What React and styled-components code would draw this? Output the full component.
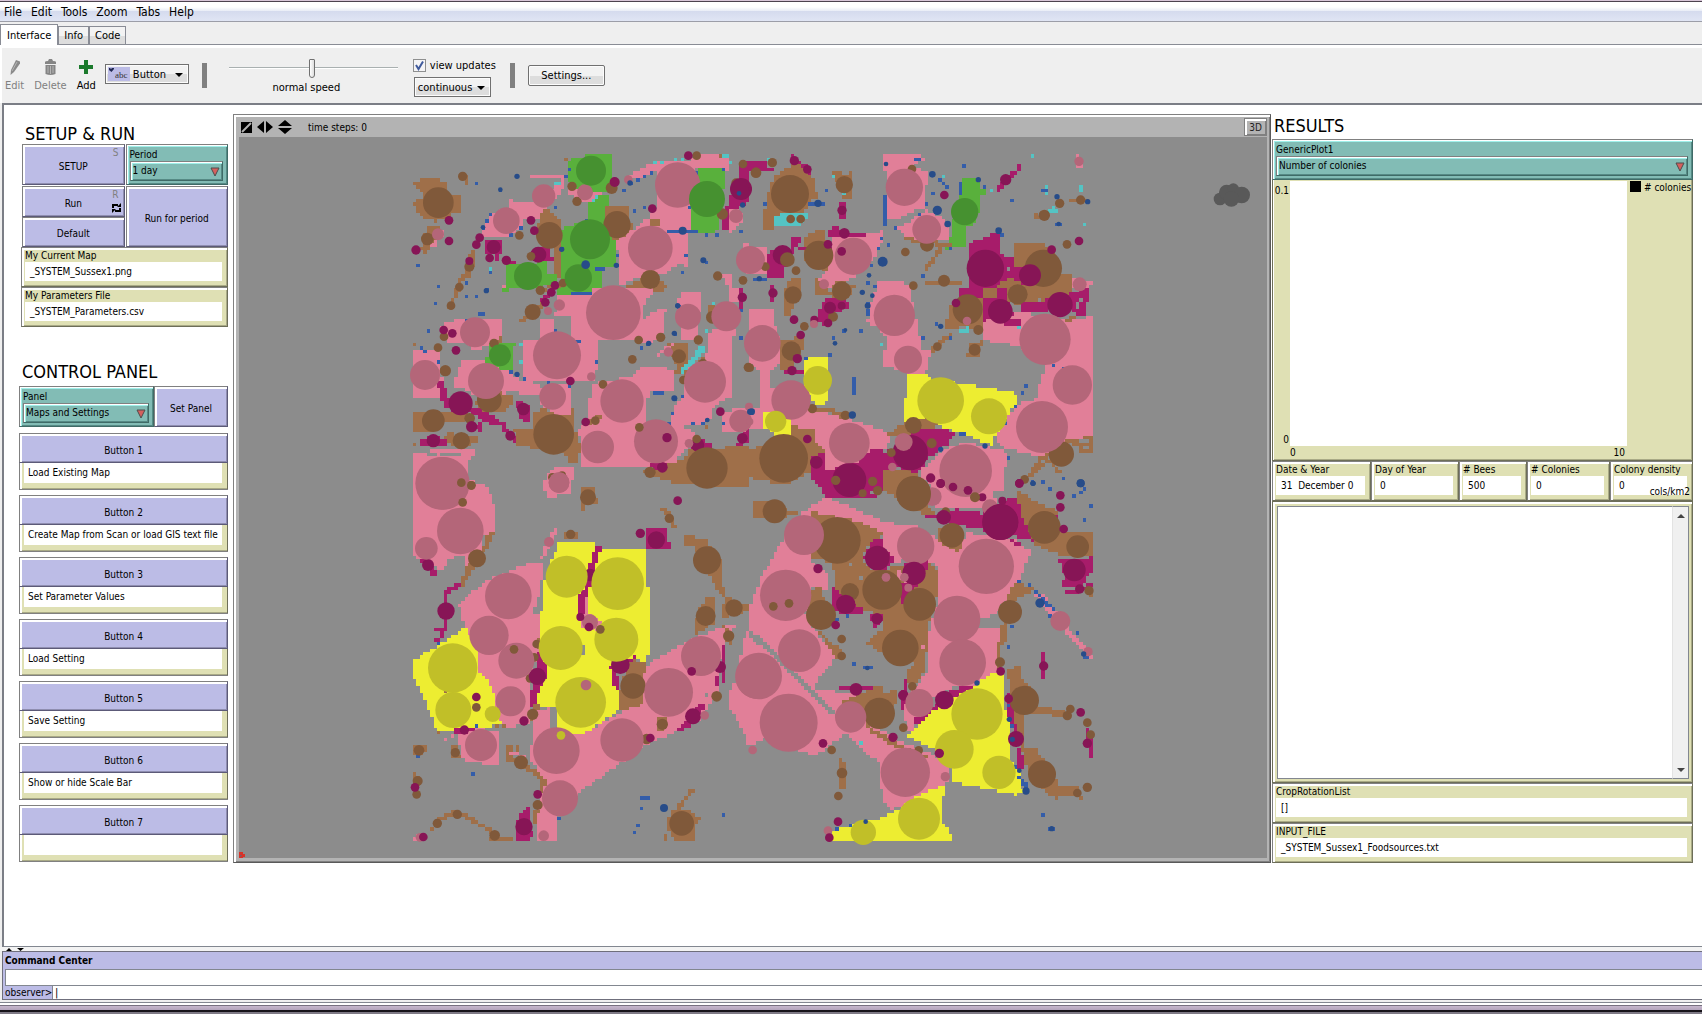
import React from "react";
import styled, { createGlobalStyle } from "styled-components";

const UI_FONT = `"DejaVu Sans Condensed", "Noto Sans", sans-serif`;

const tints = {
  p: "#e17f98",
  P: "#b46679",
  b: "#9f6f49",
  B: "#80593a",
  m: "#a71c6a",
  M: "#871556",
  g: "#59b03c",
  G: "#469130",
  y: "#eded31",
  Y: "#c1bf28",
  u: "#345da9",
  U: "#274c89",
  c: "#54c4c4",
  x: "#8c8c8c",
};

// the world is split in four sectors, each with its own origin
const origins = { A: [483, 9], B: [1533, 9], C: [483, 1029], D: [1533, 1029] };

// colour, then the corners of the field
const fields = {
  A: `
b 39,183 70,180 70,155 39,133 39,122 120,112 124,128 145,120 145,165 183,165 183,215 150,218 150,235 112,235 105,245 80,240 60,225
b 190,100 203,100 203,135 193,135
b 80,258 122,258 122,290 90,320 80,338 60,335 70,300
b 213,330 225,330 223,360 213,410 193,410 200,380
g 500,92 510,55 552,55 552,42 634,42 634,155 540,155 500,122
p 387,104 490,104 490,145 470,175 435,205 430,235 380,235 340,287 243,287 260,240 300,205 328,205 328,165 337,185 400,185 480,128 480,115 387,115
b 410,255 430,210 450,208 480,240 480,310 478,410 460,410 460,320 415,300
m 255,300 305,300 305,340 297,340 297,358 285,358 285,340 255,340
m 320,360 395,360 395,330 445,320 450,350 460,360 320,369
g 485,266 560,240 562,190 595,165 624,165 624,240 645,310 652,380 603,385 603,460 472,460 480,420
g 316,370 437,366 437,405 470,405 470,430 430,440 325,440 325,452 305,452 316,420
b 612,195 684,195 684,235 704,262 690,300 640,300 620,250
p 500,135 570,150 605,160 580,190 540,180 505,165
p 690,105 735,80 765,68 870,60 900,42 940,42 982,55 982,90 890,85 870,130 870,280 858,300 858,380 840,368 800,400 775,400 700,415 655,440 655,380 650,300 720,255 748,230 767,205 768,95 700,120
g 890,85 980,85 980,120 965,160 955,190 950,278 900,278 870,262 870,210 885,140
m 1023,62 1050,62 1050,180 1000,220 985,265 963,265 985,180 1020,120
p 985,200 1025,215 1025,250 1000,275 985,275
b 748,238 776,238 776,262 748,262
b 680,440 720,415 760,425 797,430 795,452 760,452 750,440 700,445
p 470,462 540,458 620,440 755,445 755,465 735,490 730,520 690,600 595,600 595,655 585,720 370,720 367,600 420,600 420,535 460,535 460,600 510,600 510,525 460,522 480,505
p 685,600 690,570 725,540 770,508 800,505 790,540 785,590 740,612 700,600
p 840,455 900,455 903,500 890,545 890,600 840,600 835,500
p 925,575 990,560 1012,575 993,605 993,770 940,800 925,850 840,862 808,850 820,800 850,770 850,700 920,640
p 965,402 1000,402 1000,440 1020,450 1020,485 985,480 985,440
p 1023,310 1050,310 1050,410 1023,390
b 930,492 950,492 950,550 920,550
b 805,605 858,605 858,700 820,705 835,680 810,640
c 840,690 875,655 895,615 910,615 910,640 875,680 850,700
g 265,605 345,605 345,612 335,640 335,687 290,687 245,670 270,640
p 125,560 150,545 190,535 300,535 313,570 300,605 270,612 220,635 200,612 140,612 145,590 120,575
b 285,605 313,575 300,615 260,640
p 39,630 122,635 125,700 135,760 122,778 39,778
p 185,657 212,665 255,665 330,700 370,725 420,730 420,765 330,755 250,770 180,745 160,735
b 240,755 335,760 335,790 310,815 250,820 225,790
b 39,820 100,815 160,812 205,820 200,840 110,855 100,880 39,880
m 110,720 130,720 145,770 180,790 250,810 312,850 345,890 357,915 320,890 300,855 260,850 215,820 135,808 120,760
m 60,900 90,885 130,895 145,905 130,922 60,922
m 190,870 240,848 240,872
b 150,880 255,895 225,905 200,920 160,920 130,890
m 358,770 370,790 388,800 388,842 367,842 350,800
b 340,865 400,870 400,820 430,800 460,820 520,805 525,870 545,920 530,965 500,965 500,945 430,930 350,915
p 410,740 508,735 508,822 465,822 420,790
p 575,740 610,720 690,715 728,680 820,688 820,750 760,750 735,790 735,850 830,840 905,900 850,930 830,965 820,980 612,985 545,975 545,890 530,880 560,850 562,785 575,770
m 750,975 820,965 820,980 780,998
m 850,940 900,900 930,905 930,925 870,945
b 705,985 770,990 860,950 860,925 1050,922 1050,1045 1040,1045 800,1025
p 39,940 120,930 235,925 205,970 210,1050 39,1050
p 440,1050 440,1010 470,978 522,985 522,1010 510,1050
b 545,1038 580,1038 580,1050 545,1050
p 970,815 1050,800 1050,880 970,880
m 1003,920 1035,870 1050,870 1050,900 1020,920`,
  B: `
m 0,62 45,62 45,85 75,85 75,92 0,95
m 117,42 127,42 150,70 185,85 180,100 117,65
b 50,215 45,190 70,110 110,85 140,70 195,115 195,150 210,165 208,178 180,180 165,215 80,228 75,265 38,265 38,195
c 75,228 130,213 170,215 170,235 145,258 75,258
b 240,95 262,95 285,105 300,95 312,95 312,165 300,175 275,170 262,130
m 270,185 282,185 282,235 270,235
b 148,258 158,258 158,290 148,290
b 160,290 210,268 230,268 230,300 250,330 250,390 235,405 185,370 160,350
m 125,290 158,290 158,300 130,330 120,360 105,390 105,410 55,410 48,360 60,330 120,330
p 240,290 380,280 403,265 395,310 365,365 320,405 265,435 210,450 205,420 230,395 245,340
m 228,280 250,260 270,265 290,280 345,280 345,290 240,292
m 140,317 250,317 250,328 140,328
p 0,320 45,318 45,400 0,408
b 120,412 158,412 158,450 130,480 125,520 98,525 105,500 105,450
b 195,415 240,450 260,425 320,435 305,460 275,500 240,495 245,460 190,460
m 63,430 75,430 75,490 63,490
m 225,480 290,480 300,500 255,520 240,545 215,560 200,530
b 95,600 160,590 165,625 120,687 88,687 90,660
p 3,505 75,505 75,560 90,600 90,665 65,690 65,740 150,800 270,830 350,855 430,880 400,935 360,945 320,970 220,995 220,950 190,895 195,875 70,860 40,860 0,870 0,820 25,800 25,690 0,665
m 97,688 160,688 160,698 97,698
y 168,648 240,648 240,780 205,800 180,770 168,740
y 37,812 117,812 117,882 70,882 65,872 37,870
p 402,42 505,42 525,60 480,75 535,95 520,190 530,210 590,240 597,300 470,300 440,265 530,215 515,200 415,250 415,120 402,90
g 640,114 680,114 690,140 712,145 712,160 688,165 680,250 648,260 648,318 590,326 600,290 610,240
m 660,310 720,283 745,270 755,300 745,345 790,350 795,430 775,500 815,550 780,565 700,545 630,480 630,440 655,440
b 792,310 880,310 915,340 930,400 965,405 965,460 900,480 870,512 740,475 700,475 705,440 740,440 790,400
m 740,440 775,440 775,485 740,475
m 813,485 890,485 890,515 813,515
m 785,380 830,385 830,440 785,415
m 885,480 975,455 1018,440 1008,530 980,530 955,500
p 965,415 1028,425 1010,445 965,445
b 600,500 640,465 700,480 705,560 720,575 640,560 580,575
c 610,582 660,555 660,570 640,582
p 700,545 810,515 960,545 1029,525 1029,880 955,915 950,940 870,950 750,920 735,890 800,790 855,785 885,680 810,620 702,600
m 745,535 812,535 812,555 770,560
b 660,610 700,600 685,655 648,655
p 385,425 485,430 485,470 495,530 508,540 508,590 515,630 545,635 525,700 490,700 400,680 395,660 415,600 385,560 352,550 360,500 372,460
u 312,708 321,708 321,759 312,759
y 475,700 535,700 540,720 620,728 725,745 803,760 803,795 780,815 735,890 730,915 700,905 560,855 495,835 480,852 457,850 465,770 475,765
b 480,840 530,830 580,860 500,865 470,895 415,890
m 505,860 618,875 590,915 530,960 505,1000 505,1010 470,1000 400,950 410,920 420,930
p 510,990 590,925 650,905 770,935 760,1050 560,1050 510,1010
m 170,945 230,935 230,990 320,970 345,935 400,930 440,960 405,1050 230,1050 190,1030
b 0,925 60,920 117,882 117,860 195,865 195,900 228,935 180,950 180,1000 100,1035 0,1015
b 405,990 440,985 500,1000 540,1050 405,1050`,
  C: `
p 39,0 200,0 265,20 285,80 285,160 250,165 250,205 195,270 190,225 150,235 125,270 39,230
m 50,232 75,240 110,275 110,290 95,285
b 240,220 262,160 285,160 265,200 230,250 210,290 185,322 180,310 200,260
y 39,540 95,510 190,445 205,445 232,510 240,560 300,680 315,735 210,742 160,755 110,755 90,700 60,625 39,590
p 175,370 255,305 370,255 428,245 425,310 400,400 420,405 420,500 390,590 390,735 305,740 275,620 235,570 232,500 190,430
y 480,180 500,190 610,192 610,203 735,203 735,315 747,320 747,520 735,550 700,530 640,570 655,650 655,690 550,765 470,765 470,685 408,682 418,500 430,330 440,280
x 546,498 552,498 552,528 546,528
m 585,192 610,192 595,230 575,300 565,345 551,350 551,400 531,400 531,355 550,330
p 552,355 560,355 565,400 610,430 590,450 550,440 531,420 551,400
m 410,510 437,545 437,600 405,660 405,685 387,685 387,640 410,600
b 400,675 420,675 415,720 385,720
m 630,560 660,545 705,530 705,560 650,580 660,640 635,610
b 700,540 735,545 735,690 655,692 665,600
p 735,560 850,490 1000,425 1003,440 965,500 950,640 900,720 730,800 540,935 470,1000 470,1082 408,1082 410,990 430,900 385,830 400,770 395,690 450,685 455,740 470,765 545,765 655,700 730,670
b 848,160 920,180 970,255 970,320 980,350 960,345 925,280 880,200 850,190
b 880,465 890,400 920,355 950,355 945,430 900,455
b 965,415 975,350 1050,378 1050,392 975,412
b 785,88 805,88 828,140 815,142
m 735,150 798,150 798,182 807,182 807,210 735,205
b 545,18 580,18 580,55 595,55 595,75 552,77 552,97 545,97
b 490,160 530,150 530,175 500,175
m 943,590 960,590 960,620 943,620
m 830,755 850,735 895,675 920,675 900,710 870,740
b 768,715 805,715 805,740 770,755
p 985,650 1015,575 1035,458 1050,458 1050,810 1005,700 982,690
p 175,770 200,745 300,750 297,857 245,857 240,845 185,840
m 163,745 225,738 225,750 185,765 163,762
b 39,795 80,795 75,810 50,835 39,820
b 153,795 168,795 180,835 153,835
b 315,795 335,795 345,845 315,845
m 350,1020 385,980 388,1020 400,1070 385,1082 348,1082
b 400,985 418,985 408,1030 400,1030
b 39,880 50,880 65,900 50,930 39,900
b 265,1070 335,1070 335,1082 265,1082
p 39,1070 70,1060 70,1082 39,1082
b 800,1040 810,990 860,985 885,1010 908,1012 880,1040 880,1082 820,1082
b 787,1060 798,1060 798,1082 787,1082
p 430,0 510,0 510,40 440,55`,
  D: `
m 190,0 350,0 345,30 390,50 230,50
b 10,65 80,58 85,85 155,95 80,118 5,118
p 0,380 30,300 100,175 160,95 230,50 400,125 500,140 560,190 440,250 400,200 400,160 330,130 180,105 180,240 240,290 240,330 190,320 165,400 200,460 260,530 200,600 195,630 0,450
b 180,95 330,125 400,160 375,200 345,200 340,250 180,240
p 0,470 70,530 250,700 290,760 200,825 150,815 50,770 0,800
p 255,690 190,630 330,640 350,720 440,780 540,820 600,860 590,910 425,990 400,960 385,850 290,760
p 440,165 550,165 620,215 650,160 780,165 843,215 800,320 760,370 740,400 690,420 540,445 565,370 565,290 558,250 480,240
p 540,448 755,448 740,580 690,620 610,620 550,650 500,730 480,760 458,700 458,660 530,580
b 250,250 340,250 375,270 530,250 558,255 565,310 555,380 535,440 525,560 500,610 465,610 470,570 500,555 420,530 345,490 400,445 400,400 255,390
p 445,270 475,285 475,310 445,300
m 340,235 365,180 402,170 402,220 435,225 430,250 395,270 360,260
m 250,320 300,360 340,390 340,403 270,403 250,390
m 350,400 400,400 400,420 375,445
m 455,315 500,315 475,345 470,370 455,370
m 460,250 535,240 535,260 500,310 465,300
b 165,360 190,325 212,325 215,350 235,365 240,400 200,440
b 200,445 220,460 270,520 260,540
b 560,145 640,150 630,220 560,180
m 525,110 620,88 700,100 780,50 800,50 850,170 855,200 790,170 720,155 600,130
b 410,0 500,0 540,80 560,110 525,105 400,30
p 540,30 560,0 755,0 730,40 745,80 620,85 550,80
b 795,30 880,75 930,95 930,155 1029,160 1029,230 940,230 860,195 820,120
m 928,240 1029,232 1029,270 995,320 928,322 945,290
m 945,335 975,330 1029,305 1029,320 975,342
b 795,305 855,325 825,345 800,350 775,400 770,480 755,500 755,560 735,575 745,490 755,430 770,350
p 840,335 875,340 920,390 960,450 1029,530 1020,540 950,460 900,400
m 876,520 885,520 885,600 876,600
m 262,612 300,622 370,622 370,633 270,633
b 280,665 385,615 400,620 400,645 440,625 445,660 400,700 360,740 440,790 535,830 530,835 440,805 365,760 330,690
y 475,770 550,680 610,655 690,605 720,580 760,580 762,690 785,720 785,840 800,850 820,940 800,945 610,908 610,870 540,800
m 495,715 550,680 600,630 680,615 600,660 540,700 500,745
b 770,565 812,560 815,600 855,640 860,680 935,690 960,705 935,712 860,700 825,700 825,805 860,808 875,830 900,860 930,918 985,918 995,955 980,948 900,948 850,900 825,850 800,750
m 765,635 785,635 790,720 805,740 805,800 825,840 825,865 805,865 790,750 765,690
m 1008,745 1018,745 1030,790 1030,835 1018,835
m 460,600 474,600 474,625 465,690 455,690 455,640
y 250,1055 270,1042 390,1015 450,985 500,950 590,910 575,970 580,1030 608,1072 608,1082 250,1082
b 262,838 270,838 292,860 282,930 270,930`,
};

// hedges, tracks and other strips one patch wide
const strips = {
  A: `
b 188,405 178,440 165,470 150,500
b 362,545 395,520 430,490
u 808,272 888,272
u 585,385 608,385
u 522,457 570,457
u 237,518 250,518
u 530,601 540,601
u 770,754 782,754
p 100,320 130,270
b 415,450 500,430
m 430,480 470,435
b 850,720 905,660
p 780,640 820,615
b 600,830 560,850
m 1027,445 1027,500
x 85,948 105,948
x 130,948 180,948`,
  B: `
b 525,390 550,360 575,315
b 470,295 500,305 600,314
b 525,427 635,427
u 180,190 225,190
u 15,416 40,416
m 745,150 760,125 805,90 808,76
u 498,58 512,58
u 634,135 634,160
b 545,630 580,600 605,580
b 960,180 1015,180
b 862,218 862,234 890,234
c 900,210 922,210
c 905,200 912,200
u 918,252 935,252
c 885,145 885,158
b 820,1020 850,1000 870,960 900,940
b 850,990 900,960 930,1000
b 950,905 985,905 995,935 1020,935 1020,890 1000,890
b 970,915 1020,912
x 420,246 460,240 505,215
b 190,805 240,810 280,828
b 420,885 455,860
b 950,545 975,530
u 630,887 645,887
u 408,170 408,258
m 805,1035 815,1022`,
  C: `
m 180,310 140,335 133,430 138,440 125,455 120,485 105,485
m 105,452 130,445
p 430,230 445,190 465,150
m 967,500 967,600
b 95,1048 125,1015 165,997 215,1020 275,1052
b 345,845 400,875 432,905 425,930
b 828,1000 845,970 875,935
b 975,440 990,490
u 728,953 743,953
b 350,800 350,820
p 330,815 370,830
b 410,480 410,500`,
  D: `
x 5,460 70,520 250,700
u 862,338 905,385
u 340,564 360,564
u 897,1046 912,1046
b 263,500 275,525
u 998,520 1018,535
u 815,900 830,935
x 770,600 770,690
x 797,800 797,860
x 690,420 760,420
x 690,432 760,432
x 600,875 600,900
b 920,945 920,958
b 1022,335 1022,350
x 780,170 850,190`,
};

// single patches
const specks = {
  A: `
u 351,109 229,129 301,149 465,200 269,222 259,241 249,262 332,284 362,262 55,375 116,436 106,487 197,426 197,467 229,467 259,452 269,396 197,538 85,569 65,620 75,630 116,662 495,109 505,88 485,328 557,240 649,344 649,376 700,210 731,200 670,150 690,132 710,118 731,109 751,99 884,98 967,88 915,283 946,283 1027,272 844,396 853,344 915,365 833,497 823,580 721,620 746,610 588,662 465,570 448,723 372,713 351,703 332,693 1018,513 1018,590 803,846 874,856 844,765 823,775 813,815 922,840 967,846 508,733 912,847 870,205
c 762,67 782,67 832,58 844,58 967,47 985,47 987,67 462,129 475,129 578,181 588,171 269,385 362,610 362,662 936,487 915,570
b 495,58 957,47 45,610 45,908 915,866
p 310,436 136,552`,
  B: `
u 643,78 574,119 583,129 591,140 552,160 706,140 787,181 881,155 889,150 530,190 511,221 408,200 439,262 388,324 419,313 398,294 367,375 357,426 378,436 351,487 337,570 286,570 255,590 245,641 173,652 520,406 603,323 563,550 603,590 520,590 234,150 40,190 829,733 819,754 798,796 940,682 910,673 768,848 776,949 881,1021 940,1011 1003,1042 757,283 357,508 357,518
c 849,47 583,109 726,150 992,140 992,150 1003,252 255,109 286,160 57,58 398,610 808,559
p 982,47 982,78 992,78
x 776,385 982,487 992,477 982,497 868,477
b 210,455 250,515`,
  C: `
u 116,493 55,831 218,882 475,1015 721,985 711,1036 700,1057 967,1006 229,738
b 116,760 290,740 312,740 136,638
p 136,780 156,770
x 915,646`,
  D: `
u 881,3 900,31 971,52 1022,82 1003,124 992,42 1003,22 808,308 838,320 776,503 787,434 899,411 982,461 316,554 295,411 265,421 265,1046 305,1036 881,1006 776,678 787,740 808,892 818,903 798,862 849,10
c 337,790
p 520,503
x 306,258 337,298 705,165
m 788,183 798,193 808,195 920,105`,
};

// food sources: x,y,radius
const sources = {
  A: `
B 115,188,46 188,109,14 82,297,19 208,380,15 178,441,13 153,497,13 448,286,40 358,286,13 651,254,41 516,139,14 531,184,14 635,144,18 890,47,13 1029,72,13 1008,129,14 967,222,17
M 147,241,13 147,303,13 48,330,14 239,293,13 229,314,13 393,241,13 403,272,13 281,321,21 269,354,13 319,361,14 208,363,12 415,344,24 644,126,15 757,206,13 865,47,13 1023,147,33 465,436,13 454,457,13 436,487,13 1027,472,14
B 393,349,13 421,451,14 489,429,13 398,516,24 751,418,29 953,408,14 1029,421,13 282,610,14 132,590,13 114,623,13 136,692,17 697,658,13 716,600,13 782,592,14 895,600,14 937,532,19 837,649,21 909,669,13 850,720,13 609,733,13
B 268,780,37 100,842,34 209,835,16 184,902,26 461,883,61 586,842,13 750,997,17 457,1012,13 486,1006,12 1045,682,14
M 131,570,13 157,580,13 168,631,13 182,790,36 370,807,19 215,860,17 100,902,20 331,887,15 511,723,13 557,846,13 961,815,13 787,982,16 893,915,20 1027,895,16
P 114,283,18 431,168,35 319,242,40 555,157,24 685,119,13 833,135,68 751,324,67 1008,228,21 1058,360,37 478,495,17 444,513,12 640,518,82 864,530,39 979,529,45 225,577,45 471,646,72 75,705,45 258,723,54 574,710,13 458,769,40 666,783,65 915,725,63 805,636,14 593,921,49 768,904,66 1022,843,34 867,910,13 130,1030,79 477,1028,31 1047,800,12
G 573,92,45 921,177,54 570,298,60 384,408,42 535,414,41 300,646,33
U 848,272,12 557,374,13 485,328,8 649,376,8 351,109,8 301,149,7 249,262,7 910,361,9 833,497,8 351,703,8 823,775,9 1017,160,7 1028,195,8 823,580,8 746,610,8 690,129,8 259,452,8 922,840,7 1050,815,9
B 184,1027,13 214,1036,13 718,862,13 890,897,13 921,984,62
M 801,893,14`,
  B: `
B 120,162,57 67,68,14 18,98,16 283,134,26 486,87,13 122,237,13 152,237,13 206,346,44 138,392,13 129,465,26 275,453,29 531,314,21 466,336,13 582,422,18 490,437,13 929,190,14 883,226,17 992,180,14 951,313,13 880,385,56 803,463,30 653,508,45 685,570,15 674,629,18 562,620,13 163,559,13 249,530,15 124,633,29 187,806,14 286,826,14
M 133,62,14 172,88,13 276,211,14 583,165,13 767,119,17 283,280,16 98,345,30 234,313,13 69,459,14 240,503,18 275,497,12 132,539,13 193,539,12 234,549,13 152,585,13 142,656,14 126,692,14 987,303,13 706,385,56 840,406,33 905,329,13 930,494,38 751,514,37 618,489,13 0,147,6 172,897,13 199,967,19
B 112,359,22 46,380,13 490,856,25 101,955,73 934,942,38 824,1018,13 0,683,12
M 481,938,53 298,1020,51
P 463,142,56 530,268,43 310,349,56 0,360,42 222,433,15 192,552,12 37,610,55 123,780,59 433,526,62 474,659,42 987,64,14 989,433,21 651,543,13 885,598,77 967,735,59 876,861,78 0,845,10 298,909,61 461,906,27 427,981,13 647,992,79
G 644,215,41
Y 203,721,43 77,844,32 572,782,70 717,829,54
U 204,190,11 547,103,10 562,211,14 593,252,10 685,119,8 398,365,15 746,272,10 337,457,8 353,497,9 367,467,7 357,406,7 255,610,7 307,825,11 5,815,10 572,559,8 921,170,8 1013,185,8 849,1030,8 992,1030,12 705,918,8 572,928,8 28,416,8 286,570,6 408,72,7 926,252,7
M 275,334,13 542,1014,14 572,1030,13 808,1030,13
B 257,1021,14 368,1024,14 545,910,15 424,938,13 491,1060,52`,
  C: `
B 231,235,27 564,52,24 512,163,14 808,115,14 921,241,42 917,408,30 1002,384,26 986,468,17 699,618,38 787,733,17 950,649,16 740,777,16 398,703,17 57,811,16 166,818,14 363,847,21 53,903,15 50,943,13 413,975,15 112,1030,14 172,1003,14 284,1066,16 845,1030,37 410,492,13 403,532,13 390,595,13
M 84,255,18 138,393,26 412,589,26 193,750,14 372,723,14 413,943,13 45,922,13 372,1040,26 833,62,13 721,160,14 769,180,26 570,285,19 661,554,28 960,561,18 879,709,24 751,774,13
P 125,10,79 181,153,70 79,205,34 447,186,15 325,348,70 267,466,59 349,542,54 332,664,45 243,795,48 469,812,70 480,955,54 431,1067,16 570,427,24 903,528,60 806,637,73 666,780,65 914,706,13 477,8,31 1073,590,67 60,1072,13
Y 500,290,63 653,311,79 482,504,66 649,479,66 542,667,76 158,564,74 160,690,54 278,702,24 483,766,13
U 792,984,12
B 184,8,13 214,16,13 188,67,13 342,508,13 601,448,13 229,682,13
M 541,411,12 567,441,13 229,651,13 875,574,13 70,1071,13
P 558,615,16`,
  D: `
B 74,94,36 262,181,70 300,336,27 606,166,37 213,405,45 275,477,13 275,528,13 451,504,55 487,619,13 388,700,47 460,743,13 506,811,13 883,142,49 983,200,34 1017,332,14 780,396,36 750,547,15 823,661,44 952,707,14 961,687,13 1012,728,13 1022,764,13 876,883,42 982,939,13 1012,922,14 276,879,16 245,810,13 265,948,13 587,95,13
M 382,234,37 287,373,29 204,266,14 257,435,13 381,416,17 581,112,22 751,126,54 757,62,12 931,46,13 931,82,13 941,147,13 973,270,34 989,327,14 752,574,13 881,558,14 318,628,19 460,646,16 429,772,14 992,697,13 1012,790,14 219,790,13 264,1025,13 808,10,13 697,52,12
P 162,165,60 107,346,77 148,512,64 497,198,56 547,50,28 621,417,70 638,548,70 508,669,42 709,259,83 931,423,30 1014,515,14 26,588,70 116,728,87 302,711,47 466,877,74 586,890,14 8,810,13 234,1052,13 720,82,24
B 397,329,60 509,373,49 491,42,52
M 492,280,35 583,660,28 798,777,24 776,656,13 238,1073,13 572,11,13 609,21,13 654,31,13
Y 681,702,77 613,808,58 747,877,50 507,1016,63 340,1057,38
P 408,292,13 463,292,13 475,323,12
M 568,820,14 751,126,54
B 70,379,13 117,370,13 675,52,15 383,32,14 338,40,12
U 870,369,14 681,609,8 778,718,8 787,778,8 828,933,11 347,1025,7 905,1046,8 808,872,7 992,10,12 1001,522,8 849,10,8 352,564,7`,
};

const CELL = 10.3;
const PHASE = -3.3;

const readPoints = (tokens, [ox, oy]) =>
  tokens.map((t) => {
    const [x, y, r] = t.split(",").map(Number);
    return [x + ox, y + oy, r];
  });

const readRows = (block) =>
  block
    .trim()
    .split("\n")
    .map((row) => {
      const [tint, ...tokens] = row.trim().split(" ");
      return { tint, tokens };
    });

const cellRect = (col, row, n) =>
  `M${(col * CELL + PHASE).toFixed(1)} ${(row * CELL).toFixed(1)}h${(
    n * CELL
  ).toFixed(1)}v${CELL}h-${(n * CELL).toFixed(1)}z`;

// fills whole patches whose centre lies inside the field
function fieldPath(points) {
  const ys = points.map((p) => p[1]);
  let d = "";
  const last = Math.ceil(Math.max(...ys) / CELL);
  for (let row = Math.floor(Math.min(...ys) / CELL); row <= last; row++) {
    const y = (row + 0.5) * CELL;
    const cuts = [];
    points.forEach(([x1, y1], i) => {
      const [x2, y2] = points[(i + 1) % points.length];
      if (y1 > y !== y2 > y) cuts.push(x1 + ((y - y1) / (y2 - y1)) * (x2 - x1));
    });
    cuts.sort((a, b) => a - b);
    for (let i = 0; i + 1 < cuts.length; i += 2) {
      const from = Math.round((cuts[i] - PHASE) / CELL);
      const to = Math.round((cuts[i + 1] - PHASE) / CELL);
      if (to > from) d += cellRect(from, row, to - from);
    }
  }
  return d;
}

function stripPath(points) {
  const seen = new Set();
  for (let i = 0; i + 1 < points.length; i++) {
    const [x1, y1] = points[i];
    const [x2, y2] = points[i + 1];
    const steps = Math.ceil(Math.hypot(x2 - x1, y2 - y1) / 4);
    for (let s = 0; s <= steps; s++) {
      const x = x1 + ((x2 - x1) * s) / steps;
      const y = y1 + ((y2 - y1) * s) / steps;
      seen.add(Math.floor((x - PHASE) / CELL) + "," + Math.floor(y / CELL));
    }
  }
  return [...seen].map((k) => cellRect(...k.split(",").map(Number), 1)).join("");
}

const speckPath = (points) =>
  points
    .map(([x, y]) =>
      cellRect(Math.floor((x - PHASE) / CELL), Math.floor(y / CELL), 1)
    )
    .join("");

function patchLayer(layer, toPath) {
  return Object.keys(layer).flatMap((sector) =>
    readRows(layer[sector]).map(({ tint, tokens }) => ({
      fill: tints[tint],
      d: toPath(readPoints(tokens, origins[sector])),
    }))
  );
}

const patches = [
  ...patchLayer(fields, fieldPath),
  ...patchLayer(strips, stripPath),
  ...patchLayer(specks, speckPath),
];

const circles = Object.keys(sources).flatMap((sector) =>
  readRows(sources[sector]).flatMap(({ tint, tokens }) =>
    readPoints(tokens, origins[sector]).map(([cx, cy, r]) => ({
      fill: tints[tint],
      cx,
      cy,
      r,
    }))
  )
);

function World() {
  return (
    <WorldSvg viewBox="0 0 3084 2163" role="img" aria-label="Landscape">
      <g shapeRendering="crispEdges">
        {patches.map((p, i) => (
          <path key={i} d={p.d} fill={p.fill} />
        ))}
      </g>
      {circles.map((c, i) => (
        <circle key={i} {...c} />
      ))}
      <g fill="#595959">
        <circle cx="2943" cy="186" r="19" />
        <circle cx="2963" cy="166" r="23" />
        <circle cx="2983" cy="156" r="17" />
        <circle cx="3008" cy="174" r="25" />
        <circle cx="2977" cy="186" r="23" />
      </g>
      <path d="M0 2145h12v6h6v9h-6v6H0z" fill="#d93328" />
      <circle cx="5" cy="2156" r="3" fill="#7d5a6a" />
    </WorldSvg>
  );
}

function Triangle() {
  return (
    <ChooserArrow width="10" height="10" viewBox="0 0 10 10">
      <path d="M1 1h8L5 9z" fill="#d4605e" stroke="#4d4d4d" />
    </ChooserArrow>
  );
}

function ComboArrow() {
  return (
    <ComboMark width="8" height="4" viewBox="0 0 8 4">
      <path d="M0 0h8L4 4z" />
    </ComboMark>
  );
}

function Chooser({ id, label, value }) {
  return (
    <ChooserBox>
      <label htmlFor={id}>{label}</label>
      <ChooserField>
        <select id={id} defaultValue={value}>
          <option>{value}</option>
        </select>
        <Triangle />
      </ChooserField>
    </ChooserBox>
  );
}

function Monitor({ id, label, value, unit }) {
  return (
    <MonitorBox>
      <label htmlFor={id}>{label}</label>
      <output id={id}>{value}</output>
      {unit && <Unit>{unit}</Unit>}
    </MonitorBox>
  );
}

const panelButtons = [
  "Load Existing Map",
  "Create Map from Scan or load GIS text file",
  "Set Parameter Values",
  "Load Setting",
  "Save Setting",
  "Show or hide Scale Bar",
  "",
];

function App() {
  return (
    <Page>
      <GlobalStyle />
      <MenuBar>
        {["File", "Edit", "Tools", "Zoom", "Tabs", "Help"].map((name) => (
          <button key={name}>{name}</button>
        ))}
      </MenuBar>
      <TabBar>
        <Tab $active>Interface</Tab>
        <Tab>Info</Tab>
        <Tab>Code</Tab>
      </TabBar>

      <Toolbar>
        <Tool disabled>
          <svg width="12" height="16" viewBox="0 0 12 16">
            <path d="M7 1l4 1.500v2L5 13l-3.500 3L2 11z" fill="#8a8a8a" />
            <path d="M8 3L3 12" stroke="#b5b5b5" />
          </svg>
          <span>Edit</span>
        </Tool>
        <Tool disabled>
          <svg width="13" height="16" viewBox="0 0 13 16">
            <path d="M1 3q0-1 3-1l1-2h3l1 2q3 0 3 1v2H1z" fill="#858585" />
            <path d="M1.500 6h10v9q-5 2-10 0z" fill="#858585" />
            <path d="M4 7v7M6.500 7v8M9 7v7" stroke="#b5b5b5" />
          </svg>
          <span>Delete</span>
        </Tool>
        <Tool>
          <svg width="14" height="16" viewBox="0 0 14 16">
            <path d="M5 1h4v5h5v4H9v5H5v-5H0V6h5z" fill="#1b7a2c" />
          </svg>
          <span>Add</span>
        </Tool>
        <Combo $kind="widget">
          <WidgetGlyph width="22" height="14" viewBox="0 0 22 14">
            <path d="M0 0h22v14H0z" fill="#bcbce6" />
            <path d="M1 1h1l1 1 1-1h2v1L3.500 5 1 3z" fill="#222a55" />
            <text x="7" y="11" fontSize="9" fontFamily="Liberation Serif" fill="#333">
              abc
            </text>
          </WidgetGlyph>
          <select aria-label="Widget type" defaultValue="Button">
            <option>Button</option>
          </select>
          <ComboArrow />
        </Combo>
        <Divider $after={22} />
        <Speed>
          <input id="speed" type="range" defaultValue="49" />
          <label htmlFor="speed">normal speed</label>
        </Speed>
        <Updates>
          <CheckRow>
            <CheckBox>
              <input id="updates" type="checkbox" defaultChecked />
              <svg width="11" height="11" viewBox="0 0 11 11">
                <path d="M2 5l2.500 4L9 1.500" fill="none" stroke="#3f5a9c" strokeWidth="2" />
              </svg>
            </CheckBox>
            <label htmlFor="updates">view updates</label>
          </CheckRow>
          <Combo>
            <select aria-label="Update mode" defaultValue="continuous">
              <option>continuous</option>
            </select>
            <ComboArrow />
          </Combo>
        </Updates>
        <Divider $after={13} />
        <SettingsButton>Settings...</SettingsButton>
      </Toolbar>

      <Workspace>
        <SideColumn>
          <Title $indent={6}>SETUP &amp; RUN</Title>
          <SetupBlock>
            <SetupGrid>
              <WidgetButton>
                SETUP
                <HotKey>S</HotKey>
              </WidgetButton>
              <Chooser id="period" label="Period" value="1 day" />
              <RunPair>
                <WidgetButton>
                  Run
                  <HotKey>R</HotKey>
                  <Forever width="9" height="10" viewBox="0 0 9 10">
                    <path
                      d="M1 5V2h5M8 5v3H3"
                      fill="none"
                      stroke="#000"
                      strokeWidth="2"
                    />
                    <path d="M9 0v4H5zM0 10V6h4z" />
                  </Forever>
                </WidgetButton>
                <WidgetButton>Default</WidgetButton>
              </RunPair>
              <WidgetButton>Run for period</WidgetButton>
            </SetupGrid>
            <Monitor id="map" label="My Current Map" value="_SYSTEM_Sussex1.png" />
            <Monitor
              id="params"
              label="My Parameters File"
              value="_SYSTEM_Parameters.csv"
            />
          </SetupBlock>

          <Title $indent={3} $tall>
            CONTROL PANEL
          </Title>
          <PanelRow>
            <Chooser id="panel" label="Panel" value="Maps and Settings" />
            <WidgetButton>Set Panel</WidgetButton>
          </PanelRow>
          <ButtonStack>
            {panelButtons.map((text, i) => (
              <ButtonCard key={i}>
                <WidgetButton>Button {i + 1}</WidgetButton>
                <output>{text}</output>
              </ButtonCard>
            ))}
          </ButtonStack>
        </SideColumn>

        <View>
          <ViewBar>
            <svg width="52" height="16" viewBox="0 0 52 16">
              <path d="M0 3h11v11H0z" />
              <path d="M1 13L10 4" stroke="#b3b3b3" strokeWidth="2" />
              <path d="M16 8l7-6v12zM25 2l7 6-7 6zM37 7l7-6 7 6zM37 9l7 6 7-6z" />
            </svg>
            <span>time steps: 0</span>
            <ThreeD>3D</ThreeD>
          </ViewBar>
          <World />
        </View>

        <Results>
          <Title $indent={2} $results>
            RESULTS
          </Title>
          <Chooser id="plot" label="GenericPlot1" value="Number of colonies" />
          <Plot>
            <YAxis>
              <span>0.1</span>
              <span>0</span>
            </YAxis>
            <PlotArea />
            <Legend>
              <i />
              <span># colonies</span>
            </Legend>
            <XAxis>
              <span>0</span>
              <span>10</span>
            </XAxis>
          </Plot>
          <MonitorRow>
            <Monitor id="date" label="Date &amp; Year" value="31  December 0" />
            <Monitor id="day" label="Day of Year" value="0" />
            <Monitor id="bees" label="# Bees" value="500" />
            <Monitor id="cols" label="# Colonies" value="0" />
            <Monitor id="dens" label="Colony density" value="0" unit="cols/km2" />
          </MonitorRow>
          <Output>
            <textarea aria-label="Output" readOnly />
            <ScrollTrack>
              <svg width="8" height="4" viewBox="0 0 8 4">
                <path d="M0 4h8L4 0z" fill="#444" />
              </svg>
              <svg width="8" height="4" viewBox="0 0 8 4">
                <path d="M0 0h8L4 4z" fill="#444" />
              </svg>
            </ScrollTrack>
          </Output>
          <Monitor id="crops" label="CropRotationList" value="[]" />
          <Monitor
            id="file"
            label="INPUT_FILE"
            value="_SYSTEM_Sussex1_Foodsources.txt"
          />
        </Results>
      </Workspace>

      <Splitter>
        <svg width="18" height="3" viewBox="0 0 18 3">
          <path d="M0 3h6L3 0zM11 0h7l-3.500 3z" />
        </svg>
      </Splitter>
      <CommandCenter>
        <h2>Command Center</h2>
        <CommandLog />
        <CommandLine>
          <label htmlFor="cmd">observer&gt;</label>
          <input id="cmd" defaultValue="|" />
        </CommandLine>
      </CommandCenter>
      <WindowEdge />
    </Page>
  );
}

const GlobalStyle = createGlobalStyle`
  * {
    box-sizing: border-box;
  }
  body {
    margin: 0;
    background: #ffffff;
  }
  body, button, input, select, textarea {
    font-family: ${UI_FONT};
    font-size: 11px;
    color: #000000;
  }
  main, main button, main select {
    font-size: 10px;
  }
  button, input, select, textarea {
    margin: 0;
    padding: 0;
    border: 0;
    border-radius: 0;
    outline: 0;
  }
  select {
    appearance: none;
    background: transparent;
  }
  svg {
    display: block;
  }
`;
const Page = styled.div`
  display: flex;
  flex-direction: column;
  min-height: 100vh;
  background-color: #efefef;
`;
const MenuBar = styled.nav`
  display: flex;
  gap: 9px;
  height: 22px;
  padding: 1px 4px 0;
  border-top: 1px solid #d8c6d8;
  border-bottom: 1px solid #9c9ea8;
  box-shadow: inset 0 1px #4d434f;
  background: linear-gradient(#ffffff 30%, #e8ecf6 50%, #d5dbee 52%, #e0e5f4);
  button {
    font-size: 12px;
    background: transparent;
  }
`;
const TabBar = styled.div`
  display: flex;
  align-items: flex-end;
  height: 23px;
  padding-top: 2px;
  border-bottom: 1px solid #898c95;
`;
const Tab = styled.button`
  height: ${(p) => (p.$active ? 21 : 18)}px;
  padding: 0 ${(p) => (p.$active ? 6 : 5)}px;
  margin-bottom: ${(p) => (p.$active ? -1 : 0)}px;
  border: 1px solid #898c95;
  border-bottom: 0;
  background: ${(p) =>
    p.$active ? "#ffffff" : "linear-gradient(#f3f3f3 50%, #dddddd 52%)"};
`;
const Toolbar = styled.div`
  display: flex;
  align-items: flex-start;
  height: 58px;
  padding: 11px 3px 0;
  border-top: 3px solid #ffffff;
  border-left: 2px solid #ffffff;
`;
const Tool = styled.button`
  display: flex;
  flex-direction: column;
  align-items: center;
  gap: 4px;
  margin-right: 10px;
  background: transparent;
  color: ${(p) => (p.disabled ? "#808080" : "#000000")};
`;
const Combo = styled.div`
  display: flex;
  align-items: center;
  position: relative;
  width: ${(p) => (p.$kind ? 84 : 77)}px;
  height: 20px;
  margin-top: ${(p) => (p.$kind ? 5 : 0)}px;
  margin-left: ${(p) => (p.$kind ? -1 : 1)}px;
  border: 1px solid #707070;
  box-shadow: inset 0 0 0 1px #fcfcfc;
  background: linear-gradient(#f2f2f2 50%, #dddddd 52%);
  select {
    flex: 1;
    height: 18px;
    padding-left: 3px;
  }
`;
const ComboMark = styled.svg`
  position: absolute;
  right: 5px;
  top: 8px;
  pointer-events: none;
`;
const WidgetGlyph = styled.svg`
  margin-left: 2px;
`;
const Divider = styled.div`
  width: 5px;
  height: 25px;
  margin: 4px ${(p) => p.$after}px 0 13px;
  background: #808080;
`;
const Speed = styled.div`
  display: flex;
  flex-direction: column;
  align-items: center;
  gap: 3px;
  width: 169px;
  margin-right: 15px;
  input {
    width: 169px;
    height: 19px;
    appearance: none;
    background: linear-gradient(#efefef 8px, #a9b0b0 8px, #a9b0b0 9px, #ffffff 9px, #ffffff 10px, #efefef 10px);
  }
  input::-webkit-slider-thumb {
    appearance: none;
    width: 6px;
    height: 19px;
    border: 1px solid #707070;
    border-radius: 1px 1px 3px 3px;
    background: linear-gradient(90deg, #ffffff, #dddddd);
  }
  label {
    margin-right: 14px;
  }
`;
const Updates = styled.div`
  display: flex;
  flex-direction: column;
  gap: 5px;
  margin-right: 1px;
`;
const CheckRow = styled.div`
  display: flex;
  align-items: center;
  gap: 4px;
  height: 13px;
`;
const CheckBox = styled.span`
  position: relative;
  width: 13px;
  height: 13px;
  input {
    display: block;
    appearance: none;
    width: 13px;
    height: 13px;
    border: 1px solid #8e8f8f;
    background: #f4f4f6;
  }
  svg {
    position: absolute;
    left: 1px;
    top: 1px;
    pointer-events: none;
  }
`;
const SettingsButton = styled.button`
  width: 77px;
  height: 21px;
  margin-top: 6px;
  border: 1px solid #707070;
  border-radius: 2px;
  box-shadow: inset 0 0 0 1px #fcfcfc;
  background: linear-gradient(#f2f2f2 50%, #dddddd 52%);
`;
const Workspace = styled.main`
  display: grid;
  grid-template-columns: 209px minmax(0, 1fr) 421px;
  align-items: start;
  column-gap: 5px;
  flex: 1;
  padding: 0 9px 0 15px;
  margin-left: 2px;
  border: 2px solid #7b7e86;
  border-right: 0;
  border-bottom: 1px solid #828790;
  background: #ffffff;
`;
const SideColumn = styled.section`
  display: flex;
  flex-direction: column;
`;
const Title = styled.h1`
  display: flex;
  align-items: flex-end;
  height: ${(p) => (p.$tall ? 59 : p.$results ? 34 : 39)}px;
  margin: 0 0 0 ${(p) => p.$indent}px;
  padding-bottom: ${(p) => (p.$tall ? 4 : p.$results ? 3 : 0)}px;
  font-size: 18px;
  line-height: 20px;
  font-weight: normal;
`;
const WidgetButton = styled.button`
  position: relative;
  padding-top: 4px;
  border: 1px solid #808080;
  border-right-color: #5c5a78;
  border-bottom-color: #5c5a78;
  box-shadow: inset 2px 2px #ffffff, inset -1px -1px #8f8eb0;
  background: #bcbce6;
`;
const HotKey = styled.span`
  position: absolute;
  right: 5px;
  top: 2px;
  color: #808080;
`;
const Forever = styled.svg`
  position: absolute;
  right: 3px;
  bottom: 3px;
`;
const SetupBlock = styled.div`
  margin-left: 2px;
`;
const SetupGrid = styled.div`
  display: grid;
  grid-template-columns: 1fr 1fr;
  grid-template-rows: 41px 61px;
  gap: 1px;
  margin-left: 1px;
`;
const RunPair = styled.div`
  display: grid;
  grid-template-rows: 1fr 1fr;
`;
const ChooserBox = styled.div`
  display: flex;
  flex-direction: column;
  height: 41px;
  padding: 3px 4px 0 3px;
  border: 1px solid #808080;
  border-right-color: #3f6b67;
  border-bottom-color: #3f6b67;
  box-shadow: inset 1px 1px #ffffff, inset 2px 2px #9ff0ea, inset -1px -1px #568a85;
  background: #82bcb5;
  label {
    line-height: 13px;
  }
`;
const ChooserField = styled.div`
  position: relative;
  height: 20px;
  border: 1px solid #808080;
  border-right-color: #3f6b67;
  border-bottom-color: #3f6b67;
  box-shadow: inset 1px 1px #ffffff, inset 2px 2px #9ff0ea, inset -1px -1px #568a85;
  select {
    display: block;
    width: 100%;
    height: 17px;
    padding-left: 2px;
  }
`;
const ChooserArrow = styled.svg`
  position: absolute;
  right: 2px;
  top: 5px;
  pointer-events: none;
`;
const MonitorBox = styled.div`
  display: flex;
  flex-direction: column;
  position: relative;
  min-width: 0;
  height: 40px;
  padding: 1px 5px 4px 3px;
  border: 1px solid #808080;
  border-right-color: #6d6e58;
  border-bottom-color: #6d6e58;
  box-shadow: inset 2px 2px #ffffff, inset -1px -1px #a9aa86;
  background: #dfe0b4;
  label {
    line-height: 13px;
    white-space: nowrap;
  }
  output {
    height: 19px;
    padding-left: 5px;
    line-height: 19px;
    background: #ffffff;
    white-space: pre;
  }
`;
const Unit = styled.span`
  position: absolute;
  right: 2px;
  bottom: 3px;
`;
const PanelRow = styled.div`
  display: grid;
  grid-template-columns: 135px 1fr;
`;
const ButtonStack = styled.div`
  display: grid;
  gap: 5px;
  margin-top: 6px;
`;
const ButtonCard = styled.div`
  display: grid;
  grid-template-rows: 30px 20px;
  padding-bottom: 6px;
  border: solid #808080;
  border-width: 0 0 1px 0;
  box-shadow: inset 1px 0 #808080, inset 3px 0 #ffffff, inset -1px 0 #6d6e58, inset 0 -1px #a9aa86;
  background: #dfe0b4;
  output {
    margin: 0 6px 0 5px;
    padding-left: 4px;
    line-height: 20px;
    white-space: nowrap;
    background: #ffffff;
  }
`;
const View = styled.section`
  min-width: 0;
  margin-top: 9px;
  margin-right: -4px;
  padding: 2px 3px 4px 5px;
  border: 1px solid #808080;
  border-right: 1px solid #595959;
  border-bottom: 1px solid #595959;
  box-shadow: inset 2px 2px #ffffff, inset -1px -1px #808080;
  background: #b3b3b3;
`;
const ViewBar = styled.div`
  display: flex;
  align-items: center;
  gap: 15px;
  height: 20px;
  padding-left: 2px;
`;
const ThreeD = styled.button`
  width: 23px;
  height: 18px;
  margin-left: auto;
  border: 1px solid #808080;
  box-shadow: inset 2px 2px #ffffff, inset -1px -1px #808080;
  background: #b3b3b3;
  color: #222222;
`;
const WorldSvg = styled.svg`
  width: 100%;
  background: #8c8c8c;
`;
const Results = styled.section`
  display: flex;
  flex-direction: column;
`;
const Plot = styled.div`
  display: grid;
  grid-template-columns: 15px 1fr 65px;
  grid-template-rows: 266px 13px;
  padding: 0 0 1px 2px;
  border: 1px solid #6d6e58;
  border-top: 0;
  box-shadow: inset 1px 0 #ffffff, inset -1px -1px #a9aa86;
  background: #dfe0b4;
`;
const YAxis = styled.div`
  display: flex;
  flex-direction: column;
  justify-content: space-between;
  align-items: flex-end;
  padding: 5px 1px 0 0;
  line-height: 12px;
`;
const PlotArea = styled.div`
  margin-top: 1px;
  background: #ffffff;
`;
const Legend = styled.div`
  display: flex;
  gap: 3px;
  padding: 1px 0 0 3px;
  white-space: nowrap;
  line-height: 14px;
  i {
    width: 11px;
    height: 11px;
    flex: none;
    background: #000000;
  }
`;
const XAxis = styled.div`
  grid-column: 2;
  display: flex;
  justify-content: space-between;
  padding-right: 2px;
  line-height: 14px;
`;
const MonitorRow = styled.div`
  display: grid;
  grid-template-columns: 99fr 88fr 68fr 83fr 83fr;
`;
const Output = styled.div`
  display: flex;
  height: 282px;
  padding: 4px 3px 3px 4px;
  border: 1px solid #6d6e58;
  box-shadow: inset 2px 2px #ffffff, inset -1px -1px #a9aa86;
  background: #dfe0b4;
  textarea {
    flex: 1;
    resize: none;
    border: 1px solid #828790;
    border-right: 0;
    background: #ffffff;
  }
`;
const ScrollTrack = styled.div`
  display: flex;
  flex-direction: column;
  justify-content: space-between;
  align-items: center;
  width: 17px;
  padding: 7px 0 6px;
  border: 1px solid #828790;
  border-left-color: #e3e3e3;
  background: #f0f0f0;
`;
const Splitter = styled.div`
  height: 4px;
  padding: 1px 0 0 6px;
  background: #f3f3f3;
`;
const CommandCenter = styled.section`
  padding-left: 2px;
  margin: 0 0 2px 2px;
  border: 1px solid #6f6f7c;
  border-right: 0;
  background: #bcbce6;
  h2 {
    margin: 0;
    padding-top: 1px;
    font-size: 10px;
    line-height: 16px;
  }
`;
const CommandLog = styled.div`
  height: 17px;
  border: 1px solid #828790;
  border-right: 0;
  background: #ffffff;
`;
const CommandLine = styled.div`
  display: flex;
  height: 13px;
  label {
    width: 47px;
    font-size: 10px;
    line-height: 13px;
  }
  input {
    flex: 1;
    padding-left: 2px;
    border-left: 1px solid #828790;
    background: #ffffff;
  }
`;
const WindowEdge = styled.footer`
  height: 12px;
  border-top: 1px solid #828790;
  border-bottom: 2px solid #7f7a86;
  box-shadow: inset 0 2px #ffffff, inset 0 3px #77707f, inset 0 -2px #17131a;
  background: linear-gradient(#d5c6d9, #a99ab3);
`;

export default App;
